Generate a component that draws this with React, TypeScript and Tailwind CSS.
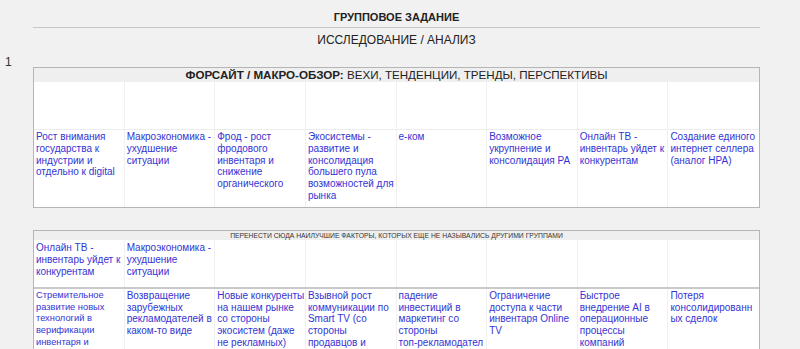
const row1 = [
  "Рост внимания государства к индустрии и отдельно к digital",
  "Макроэкономика - ухудшение ситуации",
  "Фрод - рост фродового инвентаря и снижение органического",
  "Экосистемы - развитие и консолидация большего пула возможностей для рынка",
  "е-ком",
  "Возможное укрупнение и консолидация РА",
  "Онлайн ТВ - инвентарь уйдет к конкурентам",
  "Создание единого интернет селлера (аналог НРА)",
];

const best = [
  "Онлайн ТВ - инвентарь уйдет к конкурентам",
  "Макроэкономика - ухудшение ситуации",
  "",
  "",
  "",
  "",
  "",
  "",
];

const factors: { text: string; small?: boolean }[] = [
  { text: "Стремительное развитие новых технологий в верификации инвентаря и прозрачности", small: true },
  { text: "Возвращение зарубежных рекламодателей в каком-то виде" },
  { text: "Новые конкуренты на нашем рынке со стороны экосистем (даже не рекламных)" },
  { text: "Взывной рост коммуникации по Smart TV (со стороны продавцов и" },
  { text: "падение инвестиций в маркетинг со стороны топ\u2011рекламодателей" },
  { text: "Ограничение доступа к части инвентаря Online TV" },
  { text: "Быстрое внедрение AI в операционные процессы компаний" },
  { text: "Потеря консолидированных сделок" },
];

export default function App() {
  return (
    <div className="min-h-screen h-[349px] overflow-hidden bg-[#f1f1f1] font-['Liberation_Sans',Arial,sans-serif] text-[#222]">
      <div className="flex">
        <div className="w-[33px] shrink-0 pt-[53px] pl-[5px] text-[12px] text-[#333]">1</div>
        <div className="w-[727px] shrink-0">
          <div className="pt-[10px] pb-[3px] text-center text-[11px] font-bold leading-[14px]">ГРУППОВОЕ ЗАДАНИЕ</div>
          <div className="h-px bg-[#c8c8c8]" />
          <div className="pt-[5px] text-center text-[12px] leading-[15px]">ИССЛЕДОВАНИЕ / АНАЛИЗ</div>

          <div className="mt-[19px] border border-[#b5b5b5] bg-white">
            <div className="h-[14px] bg-[#efefef] text-center text-[11.6px] leading-[14px]">
              <b>ФОРСАЙТ / МАКРО-ОБЗОР:</b> ВЕХИ, ТЕНДЕНЦИИ, ТРЕНДЫ, ПЕРСПЕКТИВЫ
            </div>
            <div className="grid grid-cols-8 h-[48px] border-b border-[#ececec]">
              {row1.map((_, i) => (
                <div key={i} className="border-r border-[#f0f0f0] last:border-r-0" />
              ))}
            </div>
            <div className="grid grid-cols-8 h-[77px]">
              {row1.map((t, i) => (
                <div
                  key={i}
                  className="border-r border-[#f0f0f0] pl-[2px] pt-[1px] text-[10px] leading-[11.8px] text-[#3434d4] break-words last:border-r-0"
                >
                  {t}
                </div>
              ))}
            </div>
          </div>

          <div className="mt-[22px] border-x border-t border-[#b5b5b5] bg-white">
            <div className="h-[9px] bg-[#efefef] text-center text-[6.8px] leading-[9px] text-[#333]">
              ПЕРЕНЕСТИ СЮДА НАИЛУЧШИЕ ФАКТОРЫ, КОТОРЫХ ЕЩЕ НЕ НАЗЫВАЛИСЬ ДРУГИМИ ГРУППАМИ
            </div>
            <div className="grid grid-cols-8 h-[49px] border-b-2 border-[#c9c9c9]">
              {best.map((t, i) => (
                <div
                  key={i}
                  className="border-r border-[#f0f0f0] pl-[2px] pt-[2px] text-[10px] leading-[12px] text-[#3434d4] last:border-r-0"
                >
                  {t}
                </div>
              ))}
            </div>
            <div className="grid grid-cols-8 h-[80px]">
              {factors.map((f, i) => (
                <div
                  key={i}
                  className={
                    f.small
                      ? "border-r border-[#f0f0f0] pl-[2px] pt-[1px] text-[9.3px] leading-[11.7px] text-[#3434d4] break-words"
                      : "border-r border-[#f0f0f0] pl-[2px] pt-[1px] text-[10px] leading-[11.7px] text-[#3434d4] break-words last:border-r-0"
                  }
                >
                  {f.text}
                </div>
              ))}
            </div>
          </div>
        </div>
      </div>
    </div>
  );
}
